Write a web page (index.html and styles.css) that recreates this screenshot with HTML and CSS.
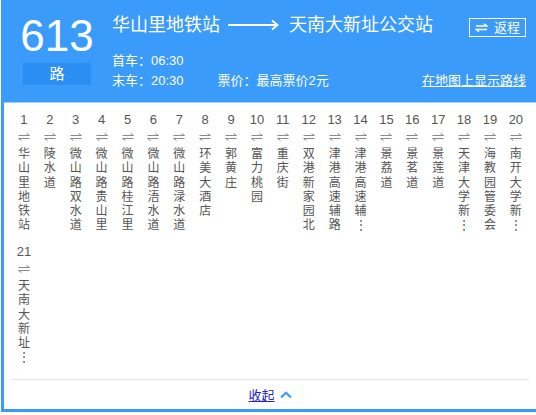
FILE: index.html
```html
<!DOCTYPE html>
<html lang="zh-CN">
<head>
<meta charset="utf-8">
<title>613路</title>
<link rel="stylesheet" href="styles.css">
</head>
<body>
<div class="panel">
  <div class="header">
    <div class="line-id">
      <div class="num">613</div>
      <div class="lu">路</div>
    </div>
    <div class="info">
      <div class="title">
        <span class="stn">华山里地铁站</span>
        <svg class="arrow" width="51" height="12" viewBox="0 0 51 12"><path d="M0 6H49" stroke="#fff" stroke-width="2" fill="none"/><path d="M44 1.5L49.5 6L44 10.5" stroke="#fff" stroke-width="2" fill="none"/></svg>
        <span class="stn">天南大新址公交站</span>
        <span class="back"><svg class="back-ic" width="13" height="9" viewBox="0 0 13 9"><path d="M1 3H12L9 0.8" stroke="#fff" stroke-width="1.3" fill="none"/><path d="M12 6.5H1L4 8.7" stroke="#fff" stroke-width="1.3" fill="none"/></svg>返程</span>
      </div>
      <div class="trow">首车：06:30</div>
      <div class="trow last">
        <span>末车：20:30</span>
        <span class="price">票价：最高票价2元</span>
        <a class="map">在地图上显示路线</a>
      </div>
    </div>
  </div>
  <div class="stops">
    <div class="stop"><div class="n">1</div><svg class="ic" width="12" height="8" viewBox="0 0 12 8"><path d="M0.5 2.5H11.5L8.5 0.5M11.5 5.5H0.5L3.5 7.5" stroke="#8a8a8a" stroke-width="1" fill="none"/></svg><div class="name">华山里地铁站</div></div>
    <div class="stop"><div class="n">2</div><svg class="ic" width="12" height="8" viewBox="0 0 12 8"><path d="M0.5 2.5H11.5L8.5 0.5M11.5 5.5H0.5L3.5 7.5" stroke="#8a8a8a" stroke-width="1" fill="none"/></svg><div class="name">陵水道</div></div>
    <div class="stop"><div class="n">3</div><svg class="ic" width="12" height="8" viewBox="0 0 12 8"><path d="M0.5 2.5H11.5L8.5 0.5M11.5 5.5H0.5L3.5 7.5" stroke="#8a8a8a" stroke-width="1" fill="none"/></svg><div class="name">微山路双水道</div></div>
    <div class="stop"><div class="n">4</div><svg class="ic" width="12" height="8" viewBox="0 0 12 8"><path d="M0.5 2.5H11.5L8.5 0.5M11.5 5.5H0.5L3.5 7.5" stroke="#8a8a8a" stroke-width="1" fill="none"/></svg><div class="name">微山路贵山里</div></div>
    <div class="stop"><div class="n">5</div><svg class="ic" width="12" height="8" viewBox="0 0 12 8"><path d="M0.5 2.5H11.5L8.5 0.5M11.5 5.5H0.5L3.5 7.5" stroke="#8a8a8a" stroke-width="1" fill="none"/></svg><div class="name">微山路桂江里</div></div>
    <div class="stop"><div class="n">6</div><svg class="ic" width="12" height="8" viewBox="0 0 12 8"><path d="M0.5 2.5H11.5L8.5 0.5M11.5 5.5H0.5L3.5 7.5" stroke="#8a8a8a" stroke-width="1" fill="none"/></svg><div class="name">微山路浯水道</div></div>
    <div class="stop"><div class="n">7</div><svg class="ic" width="12" height="8" viewBox="0 0 12 8"><path d="M0.5 2.5H11.5L8.5 0.5M11.5 5.5H0.5L3.5 7.5" stroke="#8a8a8a" stroke-width="1" fill="none"/></svg><div class="name">微山路渌水道</div></div>
    <div class="stop"><div class="n">8</div><svg class="ic" width="12" height="8" viewBox="0 0 12 8"><path d="M0.5 2.5H11.5L8.5 0.5M11.5 5.5H0.5L3.5 7.5" stroke="#8a8a8a" stroke-width="1" fill="none"/></svg><div class="name">环美大酒店</div></div>
    <div class="stop"><div class="n">9</div><svg class="ic" width="12" height="8" viewBox="0 0 12 8"><path d="M0.5 2.5H11.5L8.5 0.5M11.5 5.5H0.5L3.5 7.5" stroke="#8a8a8a" stroke-width="1" fill="none"/></svg><div class="name">郭黄庄</div></div>
    <div class="stop"><div class="n">10</div><svg class="ic" width="12" height="8" viewBox="0 0 12 8"><path d="M0.5 2.5H11.5L8.5 0.5M11.5 5.5H0.5L3.5 7.5" stroke="#8a8a8a" stroke-width="1" fill="none"/></svg><div class="name">富力桃园</div></div>
    <div class="stop"><div class="n">11</div><svg class="ic" width="12" height="8" viewBox="0 0 12 8"><path d="M0.5 2.5H11.5L8.5 0.5M11.5 5.5H0.5L3.5 7.5" stroke="#8a8a8a" stroke-width="1" fill="none"/></svg><div class="name">重庆街</div></div>
    <div class="stop"><div class="n">12</div><svg class="ic" width="12" height="8" viewBox="0 0 12 8"><path d="M0.5 2.5H11.5L8.5 0.5M11.5 5.5H0.5L3.5 7.5" stroke="#8a8a8a" stroke-width="1" fill="none"/></svg><div class="name">双港新家园北</div></div>
    <div class="stop"><div class="n">13</div><svg class="ic" width="12" height="8" viewBox="0 0 12 8"><path d="M0.5 2.5H11.5L8.5 0.5M11.5 5.5H0.5L3.5 7.5" stroke="#8a8a8a" stroke-width="1" fill="none"/></svg><div class="name">津港高速辅路</div></div>
    <div class="stop"><div class="n">14</div><svg class="ic" width="12" height="8" viewBox="0 0 12 8"><path d="M0.5 2.5H11.5L8.5 0.5M11.5 5.5H0.5L3.5 7.5" stroke="#8a8a8a" stroke-width="1" fill="none"/></svg><div class="name">津港高速辅<span class="more">⋮</span></div></div>
    <div class="stop"><div class="n">15</div><svg class="ic" width="12" height="8" viewBox="0 0 12 8"><path d="M0.5 2.5H11.5L8.5 0.5M11.5 5.5H0.5L3.5 7.5" stroke="#8a8a8a" stroke-width="1" fill="none"/></svg><div class="name">景荔道</div></div>
    <div class="stop"><div class="n">16</div><svg class="ic" width="12" height="8" viewBox="0 0 12 8"><path d="M0.5 2.5H11.5L8.5 0.5M11.5 5.5H0.5L3.5 7.5" stroke="#8a8a8a" stroke-width="1" fill="none"/></svg><div class="name">景茗道</div></div>
    <div class="stop"><div class="n">17</div><svg class="ic" width="12" height="8" viewBox="0 0 12 8"><path d="M0.5 2.5H11.5L8.5 0.5M11.5 5.5H0.5L3.5 7.5" stroke="#8a8a8a" stroke-width="1" fill="none"/></svg><div class="name">景莲道</div></div>
    <div class="stop"><div class="n">18</div><svg class="ic" width="12" height="8" viewBox="0 0 12 8"><path d="M0.5 2.5H11.5L8.5 0.5M11.5 5.5H0.5L3.5 7.5" stroke="#8a8a8a" stroke-width="1" fill="none"/></svg><div class="name">天津大学新<span class="more">⋮</span></div></div>
    <div class="stop"><div class="n">19</div><svg class="ic" width="12" height="8" viewBox="0 0 12 8"><path d="M0.5 2.5H11.5L8.5 0.5M11.5 5.5H0.5L3.5 7.5" stroke="#8a8a8a" stroke-width="1" fill="none"/></svg><div class="name">海教园管委会</div></div>
    <div class="stop"><div class="n">20</div><svg class="ic" width="12" height="8" viewBox="0 0 12 8"><path d="M0.5 2.5H11.5L8.5 0.5M11.5 5.5H0.5L3.5 7.5" stroke="#8a8a8a" stroke-width="1" fill="none"/></svg><div class="name">南开大学新<span class="more">⋮</span></div></div>
    <div class="stop"><div class="n">21</div><svg class="ic" width="12" height="8" viewBox="0 0 12 8"><path d="M0.5 2.5H11.5L8.5 0.5M11.5 5.5H0.5L3.5 7.5" stroke="#8a8a8a" stroke-width="1" fill="none"/></svg><div class="name">天南大新址<span class="more">⋮</span></div></div>
  </div>
  <div class="foot">
    <a class="fold">收起</a>
    <svg class="chev" width="12" height="8" viewBox="0 0 12 8"><path d="M1 6.5L6 1.8L11 6.5" stroke="#3d9bfb" stroke-width="2.2" fill="none"/></svg>
  </div>
</div>
</body>
</html>
```

FILE: styles.css
```css
html, body {
  margin: 0;
  padding: 0;
  background: #fff;
  overflow: hidden;
}
body {
  width: 536px;
  height: 415px;
  font-family: "Liberation Sans", "Noto Sans CJK SC", sans-serif;
}
.panel {
  width: 532px;
  margin-left: 1px;
  border: 3px solid #3b9bfb;
  border-top: 0;
  background: #fff;
}
.header {
  height: 102px;
  background: #3b9bfb;
  border-bottom: 1px solid #9fcdfd;
  display: flex;
  color: #fff;
  padding: 0 10px 0 15px;
}
.line-id {
  width: 76px;
  display: flex;
  flex-direction: column;
  align-items: center;
  padding-top: 14px;
}
.num {
  font-size: 44px;
  line-height: 44px;
  height: 44px;
}
.lu {
  margin-top: 5px;
  width: 68px;
  height: 22px;
  line-height: 22px;
  text-align: center;
  background: #2b8ef3;
  font-size: 15px;
}
.info {
  flex: 1;
  margin-left: 17px;
  padding-top: 13px;
}
.title {
  display: flex;
  align-items: flex-start;
  height: 24px;
  line-height: 24px;
  font-size: 18px;
}
.arrow {
  margin: 6px 10px 0 8px;
  display: block;
}
.back {
  margin-left: auto;
  margin-top: 5px;
  height: 17px;
  width: 55px;
  border: 1px solid #fff;
  display: flex;
  align-items: center;
  justify-content: center;
  font-size: 13px;
  line-height: 17px;
}
.back-ic {
  margin-right: 6px;
}
.trow {
  font-size: 13px;
  line-height: 20px;
  height: 20px;
}
.trow:first-of-type {
  margin-top: 14px;
}
.title + .trow {
  margin-top: 14px;
}
.trow.last {
  display: flex;
}
.price {
  margin-left: 34px;
}
.map {
  margin-left: auto;
  text-decoration: underline;
  color: #fff;
}
.stops {
  margin: 0 7px;
  padding: 9px 0 3px;
  border-bottom: 1px solid #e6e6e6;
  display: flex;
  flex-wrap: wrap;
}
.stop {
  width: 25.9px;
  height: 132px;
  display: flex;
  flex-direction: column;
  align-items: center;
  color: #555;
}
.n {
  font-size: 13px;
  line-height: 16px;
}
.ic {
  display: block;
  margin-top: 5px;
}
.name {
  margin-top: 6px;
  width: 12px;
  font-size: 12px;
  line-height: 14.3px;
  word-break: break-all;
  text-align: center;
}
.more {
  display: block;
}
.foot {
  height: 29px;
  display: flex;
  align-items: center;
  justify-content: center;
}
.fold {
  font-size: 13px;
  color: #2323c8;
  text-decoration: underline;
}
.chev {
  margin-left: 5px;
  display: block;
}
```
